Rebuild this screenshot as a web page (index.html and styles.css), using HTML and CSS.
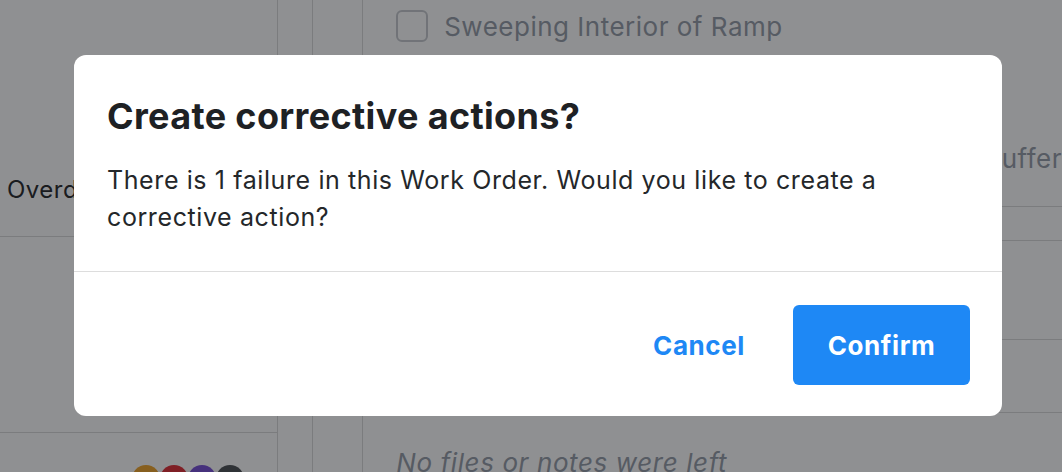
FILE: index.html
```html
<!DOCTYPE html>
<html lang="en">
<head>
    <meta charset="UTF-8">
    <meta name="viewport" content="width=device-width, initial-scale=1.0">
    <title>Work Order</title>
    <link rel="stylesheet" href="styles.css">
</head>
<body>
    <div class="pagina">
        <div class="colonna-sx">
            <div class="riga-stato">
                <span class="stato">Overdue</span>
            </div>
            <div class="riga-vuota"></div>
            <div class="riga-avatar">
                <span class="avatar giallo"></span>
                <span class="avatar rosso"></span>
                <span class="avatar viola"></span>
                <span class="avatar scuro"></span>
            </div>
        </div>
        <div class="colonna-stretta"></div>
        <div class="colonna-media"></div>
        <div class="colonna-main">
            <div class="voce">
                <span class="checkbox"></span>
                <span>Sweeping Interior of Ramp</span>
            </div>
            <div class="riga-buffer">Buffer</div>
            <div class="riga-linea"></div>
            <div class="riga-linea alta"></div>
            <div class="riga-linea media"></div>
            <div class="note">No files or notes were left</div>
        </div>
    </div>

    <div class="overlay">
        <div class="modal">
            <div class="modal-corpo">
                <h2 class="modal-titolo">Create corrective actions?</h2>
                <p class="modal-testo">There is 1 failure in this Work Order. Would you like to create a corrective action?</p>
            </div>
            <div class="modal-footer">
                <button class="btn-annulla">Cancel</button>
                <button class="btn-conferma">Confirm</button>
            </div>
        </div>
    </div>
</body>
</html>
```

FILE: styles.css
```css
body {
    margin: 0;
    font-family: Inter, "Liberation Sans", sans-serif;
    background-color: #fff;
    color: #333;
    overflow: hidden;
}
.pagina {
    display: flex;
    height: 472px;
}
/* colonna di sinistra */
.colonna-sx {
    width: 278px;
    border-right: 1px solid #dcdcdc;
    display: flex;
    flex-direction: column;
}
.colonna-sx > div {
    flex-shrink: 0;
}
.riga-stato {
    height: 237px;
    border-bottom: 1px solid #dcdcdc;
    display: flex;
    align-items: flex-end;
    padding-bottom: 32px;
    box-sizing: border-box;
}
.stato {
    font-size: 24px;
    letter-spacing: 0.5px;
    padding-left: 7px;
    color: #2f3033;
}
.riga-vuota {
    height: 195px;
    border-bottom: 1px solid #dcdcdc;
}
.riga-avatar {
    display: flex;
    padding: 32px 0 0 132px;
}
.avatar {
    width: 28px;
    height: 28px;
    border-radius: 50%;
    flex-shrink: 0;
}
.giallo { background-color: #f0a832; }
.rosso { background-color: #e3363e; }
.viola { background-color: #7d57d8; }
.scuro { background-color: #55585c; }
.colonna-stretta {
    width: 34px;
    border-right: 1px solid #dcdcdc;
}
.colonna-media {
    width: 49px;
    border-right: 1px solid #dcdcdc;
}
.colonna-main {
    flex: 1;
    padding-left: 33px;
    display: flex;
    flex-direction: column;
}
.colonna-main > div {
    flex-shrink: 0;
}
.voce {
    display: flex;
    align-items: center;
    gap: 16px;
    height: 52px;
    font-size: 26px;
    letter-spacing: 0.5px;
    color: #9aa1ab;
}
.checkbox {
    width: 28px;
    height: 28px;
    border: 2px solid #c9ccd1;
    border-radius: 6px;
}
.riga-buffer {
    height: 155px;
    padding: 91px 0 0 588px;
    box-sizing: border-box;
    font-size: 26px;
    letter-spacing: 0.5px;
    color: #9aa1ab;
    white-space: nowrap;
    border-bottom: 1px solid #dcdcdc;
}
.riga-linea {
    height: 33px;
    border-bottom: 1px solid #dcdcdc;
}
.riga-linea.alta { height: 98px; }
.riga-linea.media { height: 72px; }
.note {
    font-style: italic;
    font-size: 26px;
    letter-spacing: 0.6px;
    color: #9aa1ab;
    padding-top: 34px;
}

/* finestra modale */
.overlay {
    position: fixed;
    left: 0;
    top: 0;
    width: 100%;
    height: 100%;
    background-color: rgba(0, 2, 6, 0.44);
    display: flex;
    align-items: center;
    justify-content: center;
}
.modal {
    width: 928px;
    margin-left: 14px;
    margin-top: -1px;
    background-color: #fff;
    border-radius: 12px;
}
.modal-corpo {
    padding: 41px 33px 35px;
    border-bottom: 1px solid #dddddd;
}
.modal-titolo {
    margin: 0 0 26px;
    font-size: 36px;
    line-height: 40px;
    letter-spacing: 0.35px;
    font-weight: 700;
    color: #1e2124;
}
.modal-testo {
    margin: 0;
    font-size: 25px;
    line-height: 37px;
    letter-spacing: 0.6px;
    color: #24272a;
}
.modal-footer {
    display: flex;
    justify-content: flex-end;
    align-items: center;
    gap: 48px;
    padding: 33px 32px 31px;
}
.btn-annulla {
    background: none;
    border: none;
    font-family: inherit;
    font-size: 26px;
    letter-spacing: 0.6px;
    font-weight: 700;
    color: #1e88f5;
    padding: 0;
    cursor: pointer;
}
.btn-conferma {
    width: 177px;
    height: 80px;
    background-color: #1e88f5;
    color: #fff;
    border: none;
    border-radius: 6px;
    font-family: inherit;
    font-size: 26px;
    letter-spacing: 0.6px;
    font-weight: 700;
    cursor: pointer;
}
```
